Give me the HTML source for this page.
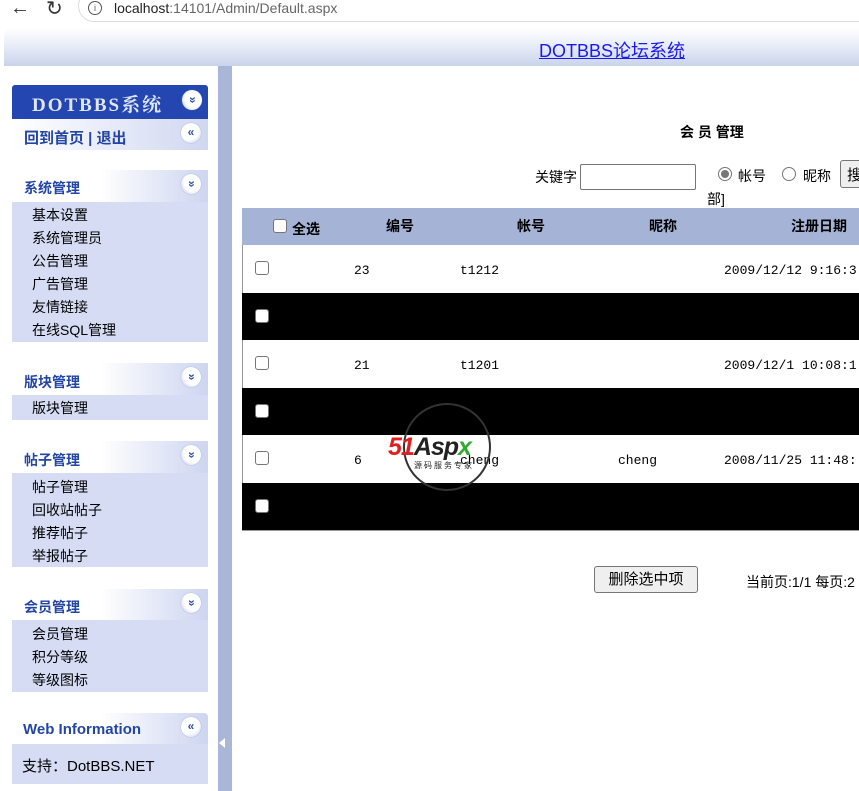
<!DOCTYPE html>
<html><head><meta charset="utf-8"><style>
*{margin:0;padding:0;box-sizing:border-box}
body{width:859px;height:791px;overflow:hidden;background:#fff;font-family:"Liberation Sans","Noto Sans CJK SC",sans-serif;font-size:14px;color:#000;position:relative}
.abs{position:absolute}
.hd{font-weight:bold;color:#2346a6;font-size:14px}
.ic{position:absolute;width:20px;height:20px;border-radius:50%;background:radial-gradient(circle at 40% 35%,#fff 55%,#b8c2e4);color:#3050b0;font-size:12px;font-weight:bold;text-align:center;line-height:19px;box-shadow:0 0 1px #7080c0}
.dn{transform:rotate(90deg)}
.blk{position:absolute;left:12px;width:196px;background:#d6dcf4}
.bh{position:absolute;left:12px;width:196px;height:32px;background:linear-gradient(90deg,#fff 0,#fff 45%,#cdd5f0 100%)}
.it{position:absolute;left:32px;font-size:14px}
.cb{position:absolute;width:14px;height:14px;border:1px solid #767676;border-radius:3px;background:#fff}
.row{position:absolute;left:242px;width:617px;height:48px}
.mono{font-family:"Liberation Mono","Noto Sans CJK SC",monospace;font-size:13px}
</style></head><body>
<div class="abs" style="left:0;top:0;width:859px;height:26px;background:#fff"></div>
<div class="abs" style="left:10px;top:-3px;font-size:20px;color:#333">←</div>
<div class="abs" style="left:46px;top:-4px;font-size:20px;color:#333">↻</div>
<div class="abs" style="left:78px;top:-10px;width:800px;height:32px;border-radius:16px;background:#fff;border:1px solid #ddd"></div>
<div class="abs" style="left:88px;top:1px;width:14px;height:14px;border:1px solid #555;border-radius:50%;font-size:9px;text-align:center;line-height:12px;color:#555">i</div>
<div class="abs" style="left:114px;top:0px;font-size:14px;color:#222">localhost<span style="color:#666">:14101/Admin/Default.aspx</span></div>
<div class="abs" style="left:4px;top:28px;width:860px;height:38px;border-radius:8px 0 0 0;background:linear-gradient(#fff,#e6ebf6 50%,#c9d3ec)"></div>
<div class="abs" style="left:539px;top:37px;font-size:18px;color:#1a1aee;text-decoration:underline">DOTBBS论坛系统</div>
<div class="abs" style="left:218px;top:66px;width:14px;height:725px;background:#a9b6d8"></div>
<div class="abs" style="left:219px;top:738px;width:0;height:0;border-top:5px solid transparent;border-bottom:5px solid transparent;border-right:6px solid #fff"></div>
<div class="abs" style="left:12px;top:85px;width:196px;height:34px;background:#2346b0;border-radius:3px 3px 0 0"></div>
<div class="abs" style="left:32px;top:90px;font-size:19px;color:#dfe6ff;font-weight:bold;letter-spacing:2px;font-family:'Liberation Serif','Noto Serif CJK SC',serif">DOTBBS系统</div>
<div class="ic dn" style="left:182px;top:90px">»</div>
<div class="bh" style="top:119px;height:31px;background:linear-gradient(90deg,#fff,#d0d7f1)"></div>
<div class="abs hd" style="left:24px;top:127px;font-size:15px">回到首页 | 退出</div>
<div class="ic" style="left:181px;top:123px">«</div>

<div class="bh" style="top:170px"></div><div class="abs hd" style="left:24px;top:178px">系统管理</div><div class="ic dn" style="left:181px;top:174px">»</div>
<div class="blk" style="top:202px;height:140px"></div>
<div class="it" style="top:205px">基本设置</div><div class="it" style="top:228px">系统管理员</div><div class="it" style="top:251px">公告管理</div><div class="it" style="top:274px">广告管理</div><div class="it" style="top:297px">友情链接</div><div class="it" style="top:320px">在线SQL管理</div>

<div class="bh" style="top:363px"></div><div class="abs hd" style="left:24px;top:372px">版块管理</div><div class="ic dn" style="left:181px;top:367px">»</div>
<div class="blk" style="top:395px;height:25px"></div><div class="it" style="top:398px">版块管理</div>

<div class="bh" style="top:441px"></div><div class="abs hd" style="left:24px;top:450px">帖子管理</div><div class="ic dn" style="left:181px;top:445px">»</div>
<div class="blk" style="top:473px;height:94px"></div>
<div class="it" style="top:477px">帖子管理</div><div class="it" style="top:500px">回收站帖子</div><div class="it" style="top:523px">推荐帖子</div><div class="it" style="top:546px">举报帖子</div>

<div class="bh" style="top:589px"></div><div class="abs hd" style="left:24px;top:597px">会员管理</div><div class="ic dn" style="left:181px;top:593px">»</div>
<div class="blk" style="top:620px;height:72px"></div>
<div class="it" style="top:624px">会员管理</div><div class="it" style="top:647px">积分等级</div><div class="it" style="top:670px">等级图标</div>

<div class="bh" style="top:713px;height:31px;border-radius:0 4px 0 0"></div><div class="abs hd" style="left:23px;top:721px;font-size:15px">Web Information</div><div class="ic" style="left:181px;top:717px">«</div>
<div class="blk" style="top:744px;height:40px"></div><div class="abs" style="left:22px;top:755px;font-size:15px">支持：DotBBS.NET</div>

<div class="abs" style="left:680px;top:122px;font-weight:bold;font-size:14px">会 员 管理</div>
<div class="abs" style="left:535px;top:167px">关键字</div>
<div class="abs" style="left:580px;top:164px;width:116px;height:26px;border:1px solid #767676;border-radius:2px"></div>
<div class="abs" style="left:718px;top:167px;width:14px;height:14px;border:1px solid #767676;border-radius:50%"><div style="margin:2px;width:8px;height:8px;border-radius:50%;background:#777"></div></div>
<div class="abs" style="left:738px;top:166px">帐号</div>
<div class="abs" style="left:782px;top:167px;width:14px;height:14px;border:1px solid #767676;border-radius:50%"></div>
<div class="abs" style="left:803px;top:166px">昵称</div>
<div class="abs" style="left:840px;top:160px;width:30px;height:28px;border:1px solid #767676;border-radius:3px;background:#efefef;padding:3px 6px;font-size:15px">搜</div>
<div class="abs" style="left:707px;top:189px">部]</div>

<div class="abs" style="left:242px;top:208px;width:617px;height:37px;background:#a4b3d6"></div>
<div class="cb" style="left:273px;top:219px"></div>
<div class="abs" style="left:292px;top:219px;font-weight:bold">全选</div>
<div class="abs" style="left:386px;top:216px;font-weight:bold">编号</div>
<div class="abs" style="left:517px;top:216px;font-weight:bold">帐号</div>
<div class="abs" style="left:649px;top:216px;font-weight:bold">昵称</div>
<div class="abs" style="left:791px;top:216px;font-weight:bold">注册日期</div>

<div class="row" style="top:245px;background:#fff;border-left:1px solid #999"></div>
<div class="row" style="top:293px;height:47px;background:#000"></div>
<div class="row" style="top:340px;background:#fff;border-left:1px solid #999"></div>
<div class="row" style="top:388px;height:47px;background:#000"></div>
<div class="row" style="top:435px;background:#fff;border-left:1px solid #999"></div>
<div class="row" style="top:483px;height:47px;background:#000"></div>
<div class="abs" style="left:242px;top:530px;width:617px;height:1px;background:#999"></div>

<div class="cb" style="left:255px;top:261px"></div><div class="abs mono" style="left:354px;top:263px">23</div><div class="abs mono" style="left:460px;top:263px">t1212</div><div class="abs mono" style="left:724px;top:263px">2009/12/12 9:16:3</div>
<div class="cb" style="left:255px;top:309px"></div>
<div class="cb" style="left:255px;top:356px"></div><div class="abs mono" style="left:354px;top:358px">21</div><div class="abs mono" style="left:460px;top:358px">t1201</div><div class="abs mono" style="left:724px;top:358px">2009/12/1 10:08:1</div>
<div class="cb" style="left:255px;top:404px"></div>
<div class="cb" style="left:255px;top:451px"></div><div class="abs mono" style="left:354px;top:453px">6</div><div class="abs mono" style="left:460px;top:453px">cheng</div><div class="abs mono" style="left:618px;top:453px">cheng</div><div class="abs mono" style="left:724px;top:453px">2008/11/25 11:48:</div>
<div class="cb" style="left:255px;top:499px"></div>
<div class="abs" style="left:403px;top:403px;width:88px;height:88px;border:2px solid #333;border-radius:50%"></div>
<div class="abs" style="left:388px;top:433px;font-size:25px;font-weight:bold;font-style:italic;color:#e02020;letter-spacing:-1px">51<span style="color:#222">Asp</span><span style="color:#3a3">x</span></div>
<div class="abs" style="left:414px;top:460px;font-size:8px;color:#222;letter-spacing:2px">源码服务专家</div>

<div class="abs" style="left:594px;top:566px;width:104px;height:27px;border:1px solid #767676;border-radius:3px;background:#efefef;text-align:center;line-height:25px;font-size:15px">删除选中项</div>
<div class="abs" style="left:746px;top:572px">当前页:1/1 每页:2</div>
</body></html>
